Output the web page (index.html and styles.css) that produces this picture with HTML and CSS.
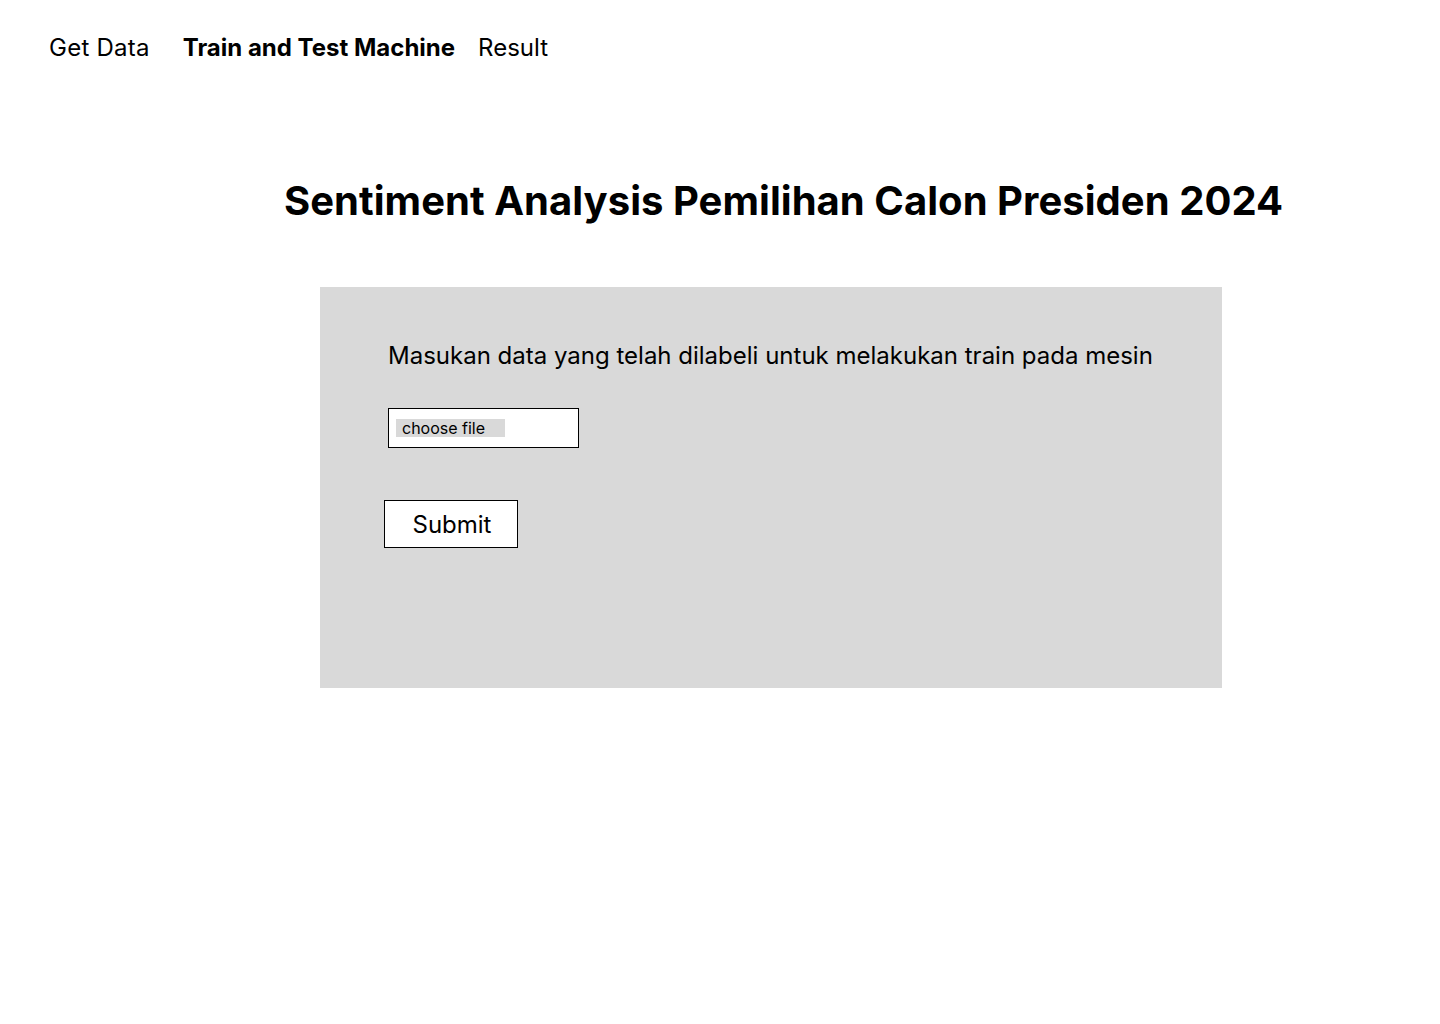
FILE: index.html
```html
<!DOCTYPE html>
<html>
<head>
<meta charset="utf-8">
<link rel="stylesheet" href="styles.css">
</head>
<body>
<nav class="nav">
  <a class="nav-item">Get Data</a>
  <a class="nav-item active">Train and Test Machine</a>
  <a class="nav-item">Result</a>
</nav>
<h1 class="title">Sentiment Analysis Pemilihan Calon Presiden 2024</h1>
<section class="panel">
  <p class="panel-text">Masukan data yang telah dilabeli untuk melakukan train pada mesin</p>
  <div class="file-input"><span class="file-btn">choose file</span></div>
  <button class="submit">Submit</button>
</section>
</body>
</html>
```

FILE: styles.css
```css
* { box-sizing: border-box; }
body {
  margin: 0;
  font-family: Inter, "Noto Sans", sans-serif;
  color: #000;
  background: #fff;
}
.nav {
  display: flex;
  align-items: center;
  height: 48px;
  margin-top: 24px;
  padding-left: 49px;
}
.nav-item {
  font-size: 24px;
  line-height: 48px;
  margin-right: 23px;
}
.nav-item:first-child { margin-right: 33px; letter-spacing: 0.25px; }
.active { font-weight: 700; }
.title {
  margin: 99px 0 0 0;
  padding-left: 284px;
  font-size: 40px;
  font-weight: 700;
  line-height: 60px;
  letter-spacing: 0.04px;
}
.panel {
  margin: 56px 0 0 320px;
  width: 902px;
  height: 401px;
  background: #d9d9d9;
  padding: 49px 0 0 68px;
}
.panel-text {
  margin: 0;
  font-size: 24px;
  line-height: 40px;
}
.file-input {
  margin-top: 32px;
  width: 191px;
  height: 40px;
  border: 1px solid #000;
  background: #fff;
  display: flex;
  align-items: center;
  padding-left: 7px;
}
.file-btn {
  background: #d9d9d9;
  width: 109px;
  height: 18px;
  font-size: 16px;
  line-height: 18px;
  padding-left: 6px;
}
.submit {
  display: block;
  margin: 52px 0 0 -4px;
  width: 134px;
  height: 48px;
  border: 1px solid #000;
  background: #fff;
  font-family: Inter, sans-serif;
  font-size: 24px;
  padding: 0 0 0 2px;
  border-radius: 0;
  color: #000;
}
```
